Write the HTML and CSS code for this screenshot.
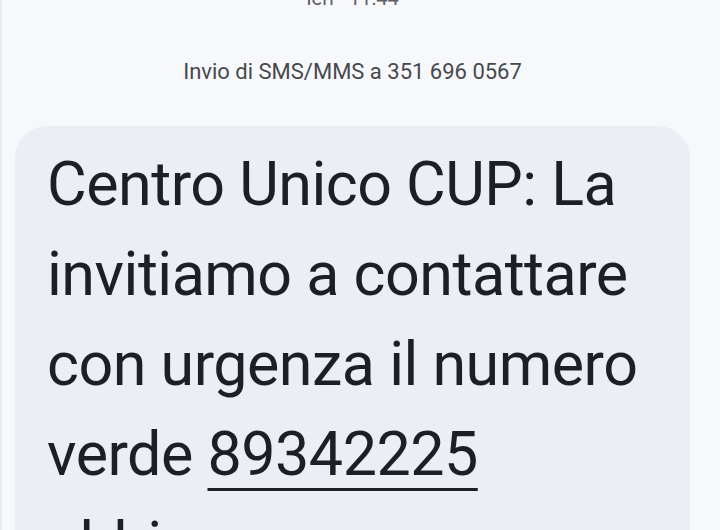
FILE: index.html
```html
<!DOCTYPE html>
<html lang="it">
<head>
    <meta charset="UTF-8">
    <meta name="viewport" content="width=device-width, initial-scale=1.0">
    <title>Messaggi</title>
    <link rel="stylesheet" href="styles.css">
</head>
<body>
    <div class="thread">
        <div class="timestamp">Ieri · 11:44</div>
        <div class="sent-to">Invio di SMS/MMS a 351 696 0567</div>

        <div class="bubble">
            <p class="message">
                Centro Unico CUP: La invitiamo a contattare con urgenza il numero verde <a href="tel:89342225">89342225</a> abbiamo una comunicazione per Lei.
            </p>
        </div>
    </div>
</body>
</html>
```

FILE: styles.css
```css
body {
    font-family: Roboto, 'Noto Sans', sans-serif;
    margin: 0;
    padding: 0;
    background-color: #f7f8fc;
    overflow: hidden;
}

.thread {
    border-left: 2px solid #e9eaf0;
    padding: 1px 30px 0 13px;
}

.timestamp {
    margin-top: -15px;
    text-align: center;
    font-size: 20px;
    line-height: 24px;
    color: #5f6066;
}

.sent-to {
    margin-top: 48px;
    text-align: center;
    font-size: 22px;
    line-height: 28px;
    color: #47484d;
}

.bubble {
    margin-top: 40px;
    background-color: #eceef6;
    border-radius: 32px;
    padding: 13px 30px 40px 32px;
}

.message {
    margin: 0;
    font-size: 61px;
    line-height: 90px;
    letter-spacing: -0.5px;
    color: #1e1f24;
}

.message a {
    color: inherit;
    text-decoration: underline;
    text-decoration-thickness: 3px;
    text-underline-offset: 13px;
}
```
